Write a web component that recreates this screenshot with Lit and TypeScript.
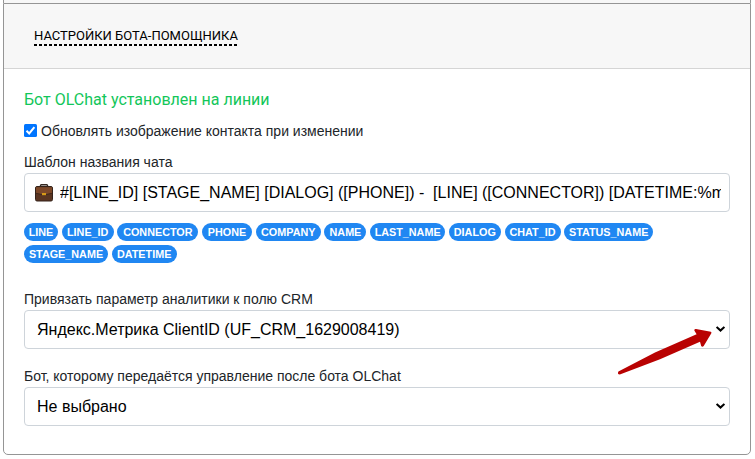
import { LitElement, html, css } from "lit";
import { customElement } from "lit/decorators.js";

const TAGS: [string, number][][] = [
  [["LINE", 34], ["LINE_ID", 52], ["CONNECTOR", 81], ["PHONE", 50], ["COMPANY", 65], ["NAME", 42],
   ["LAST_NAME", 75], ["DIALOG", 52], ["CHAT_ID", 56], ["STATUS_NAME", 89]],
  [["STAGE_NAME", 84], ["DATETIME", 65]],
];

@customElement("app-root")
export class AppRoot extends LitElement {
  static styles = css`
    :host { display: block; height: 459px; overflow: hidden; background: #fff;
      font-family: "Liberation Sans", Arial, sans-serif; color: #212529; }
    * { box-sizing: border-box; }
    .previous { height: 3px; margin: 0 4px 0 3px; background: #f7f7f7;
      border: solid #959595; border-width: 0 1px; }
    .card { margin: 0 4px 0 3px; height: 452px; border: 1px solid #959595; border-radius: 0 0 5px 5px; }
    .header { height: 65px; background: #f7f7f7; border-bottom: 1px solid #d5d5d5; padding: 23px 0 0 30px; }
    .title { display: block; width: 203px; height: 19px; color: #000;
      background: repeating-linear-gradient(90deg, #000 0 3px, transparent 3px 5px) 0 100% / 100% 2px no-repeat;
      font: 13px/17px Roboto, sans-serif; white-space: nowrap; }
    .body { padding: 20px 20px 0; font-size: 14px; line-height: 20px; white-space: nowrap; }
    .status { font: 16px/22px Roboto, sans-serif; color: #13c65a; }
    .check { display: flex; align-items: center; height: 20px; margin-top: 10px; }
    .box { width: 13px; height: 13px; margin: -2px 4px 0 0; display: block; }
    .label { height: 20px; margin-top: 11px; }
    .field { display: flex; align-items: center; width: 706px; height: 39px; margin-top: 1px;
      border: 1px solid #ced4da; border-radius: 4px; padding: 0 6px 0 12px; font-size: 16px; color: #000; }
    .template { padding: 0 8px 0 9px; }
    .value { flex: 1; overflow: hidden; white-space: pre; }
    .template .value { padding-top: 1px; }
    .case { width: 20px; height: 20px; margin-right: 6px; flex: none; }
    .chevron { width: 9px; height: 6px; flex: none; margin: -1px -2px 0 0; }
    .tags { margin-top: 11px; display: grid; gap: 4px; }
    .row { display: flex; gap: 3.7px; }
    .tag { height: 18px; border-radius: 9px; background: #2087f2; color: #fff; text-align: center;
      font-size: 10.8px; line-height: 18px; font-weight: 700; flex: none; }
    .crm { margin-top: 26px; }
    .bot { margin-top: 17px; }
    .arrow { position: absolute; left: 616px; top: 327px; width: 98px; height: 50px; }
  `;

  private chevron() {
    return html`<svg class="chevron" viewBox="0 0 9 6"><path d="M.6 .9 4.5 4.5 8.4 .9" fill="none" stroke="#000" stroke-width="2.1"/></svg>`;
  }

  private briefcase() {
    return html`<svg class="case" viewBox="0 0 20 20">
      <path d="M6.5 4V2.6Q6.5 1.8 7.3 1.8h5.4q.8 0 .8.8V4" fill="none" stroke="#332720" stroke-width="1.4"/>
      <rect x="1.5" y="3.5" width="17" height="14.5" rx="1.5" fill="#5a3522" stroke="#34231b"/>
      <path d="M2 4.3h16v5.8l-6 1.3H8l-6-1.3z" fill="#7d4829"/>
      <path d="M2 10.3 8 11.6h4l6-1.3" fill="none" stroke="#3e271b" stroke-width=".9"/>
      <rect x="8" y="10" width="4" height="2.2" fill="#d69a19"/>
    </svg>`;
  }

  render() {
    return html`
      <div class="previous"></div>
      <div class="card">
        <div class="header"><span class="title">НАСТРОЙКИ БОТА-ПОМОЩНИКА</span></div>
        <div class="body">
          <div class="status">Бот OLChat установлен на линии</div>
          <div class="check">
            <svg class="box" viewBox="0 0 13 13"><rect width="13" height="13" rx="1.5" fill="#0075ff"/><path d="m2.5 6.7 2.7 2.7 5.2-6.2" fill="none" stroke="#fff" stroke-width="2"/></svg>
            <span>Обновлять изображение контакта при изменении</span>
          </div>
          <div class="label">Шаблон названия чата</div>
          <div class="field template">${this.briefcase()}<span class="value">#[LINE_ID] [STAGE_NAME] [DIALOG] ([PHONE]) -  [LINE] ([CONNECTOR]) [DATETIME:%m</span></div>
          <div class="tags">
            ${TAGS.map((row) => html`<div class="row">${row.map(([name, width]) => html`<span class="tag" style="width:${width}px">${name}</span>`)}</div>`)}
          </div>
          <div class="label crm">Привязать параметр аналитики к полю CRM</div>
          <div class="field"><span class="value">Яндекс.Метрика ClientID (UF_CRM_1629008419)</span>${this.chevron()}</div>
          <div class="label bot">Бот, которому передаётся управление после бота OLChat</div>
          <div class="field"><span class="value">Не выбрано</span>${this.chevron()}</div>
        </div>
      </div>
      <svg class="arrow" viewBox="616 327 98 50"><path d="M618.4 371.4 655 352.5 696.6 334.2 694.3 330.4Q694.3 328.8 696 329L710.8 331.7Q712 332.2 711.2 333.4L703.7 346Q702.3 347.5 701.2 346L700 341.8 660 359.3 619.8 374.6Q617 374.2 618.4 371.4Z" fill="#b90202"/></svg>
    `;
  }
}
